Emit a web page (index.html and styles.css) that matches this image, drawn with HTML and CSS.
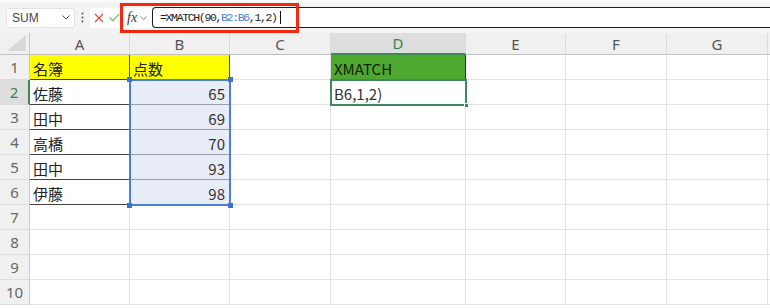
FILE: index.html
```html
<!DOCTYPE html>
<html lang="ja">
<head>
    <meta charset="UTF-8">
    <title>XMATCH</title>
    <link rel="stylesheet" href="styles.css">
</head>
<body>
<div class="toolbar">
    <div class="namebox">
        <span>SUM</span>
        <svg width="8" height="5" viewBox="0 0 8 5"><path d="M0.5 0.5 L4 4 L7.5 0.5" fill="none" stroke="#555" stroke-width="1"/></svg>
    </div>
    <div class="grip">
        <svg width="3" height="11" viewBox="0 0 3 11"><circle cx="1.5" cy="1.5" r="1" fill="#555"/><circle cx="1.5" cy="5.5" r="1" fill="#555"/><circle cx="1.5" cy="9.5" r="1" fill="#555"/></svg>
    </div>
    <div class="edit-btns">
        <svg width="10" height="10" viewBox="0 0 10 10"><path d="M1 1 L9 9 M9 1 L1 9" stroke="#e0483c" stroke-width="1.1"/></svg>
        <svg width="11" height="9" viewBox="0 0 11 9"><path d="M0.7 4.6 L3.8 7.7 L10.3 0.9" fill="none" stroke="#5bb66a" stroke-width="1.1"/></svg>
    </div>
    <div class="fx-btn">
        <span class="fx">fx</span>
        <svg width="7" height="4" viewBox="0 0 7 4"><path d="M0.5 0.5 L3.5 3.5 L6.5 0.5" fill="none" stroke="#888" stroke-width="1"/></svg>
    </div>
    <div class="formula">=XMATCH(90,<span class="ref-txt">B2:B6</span>,1,2)<span class="caret"></span></div>
    <div class="mark"></div>
</div>

<div class="sheet">
    <!-- column headers -->
    <div class="c corner"><svg width="19" height="16" viewBox="0 0 19 16"><path d="M19 0 L19 16 L0 16 Z" fill="#d9d9d9"/></svg></div>
    <div class="c hd">A</div>
    <div class="c hd">B</div>
    <div class="c hd">C</div>
    <div class="c hd sel">D</div>
    <div class="c hd">E</div>
    <div class="c hd">F</div>
    <div class="c hd">G</div>
    <div class="c hd"></div>

    <!-- row 1 -->
    <div class="c rh">1</div>
    <div class="c yel box">名簿</div>
    <div class="c yel box">点数</div>
    <div class="c"></div>
    <div class="c green box">XMATCH</div>
    <div class="c"></div><div class="c"></div><div class="c"></div><div class="c"></div>

    <!-- row 2 -->
    <div class="c rh sel">2</div>
    <div class="c box">佐藤</div>
    <div class="c box num ref">65</div>
    <div class="c"></div>
    <div class="c edit">B6,1,2)</div>
    <div class="c"></div><div class="c"></div><div class="c"></div><div class="c"></div>

    <!-- row 3 -->
    <div class="c rh">3</div>
    <div class="c box">田中</div>
    <div class="c box num ref">69</div>
    <div class="c"></div><div class="c"></div>
    <div class="c"></div><div class="c"></div><div class="c"></div><div class="c"></div>

    <!-- row 4 -->
    <div class="c rh">4</div>
    <div class="c box">高橋</div>
    <div class="c box num ref">70</div>
    <div class="c"></div><div class="c"></div>
    <div class="c"></div><div class="c"></div><div class="c"></div><div class="c"></div>

    <!-- row 5 -->
    <div class="c rh">5</div>
    <div class="c box">田中</div>
    <div class="c box num ref">93</div>
    <div class="c"></div><div class="c"></div>
    <div class="c"></div><div class="c"></div><div class="c"></div><div class="c"></div>

    <!-- row 6 -->
    <div class="c rh">6</div>
    <div class="c box">伊藤</div>
    <div class="c box num ref">98</div>
    <div class="c"></div><div class="c"></div>
    <div class="c"></div><div class="c"></div><div class="c"></div><div class="c"></div>

    <!-- rows 7 - 10 -->
    <div class="c rh">7</div>
    <div class="c"></div><div class="c"></div><div class="c"></div><div class="c"></div>
    <div class="c"></div><div class="c"></div><div class="c"></div><div class="c"></div>

    <div class="c rh">8</div>
    <div class="c"></div><div class="c"></div><div class="c"></div><div class="c"></div>
    <div class="c"></div><div class="c"></div><div class="c"></div><div class="c"></div>

    <div class="c rh">9</div>
    <div class="c"></div><div class="c"></div><div class="c"></div><div class="c"></div>
    <div class="c"></div><div class="c"></div><div class="c"></div><div class="c"></div>

    <div class="c rh">10</div>
    <div class="c"></div><div class="c"></div><div class="c"></div><div class="c"></div>
    <div class="c"></div><div class="c"></div><div class="c"></div><div class="c"></div>

    <!-- selections drawn over the grid -->
    <div class="range-sel">
        <span class="knob tl"></span><span class="knob tr"></span>
        <span class="knob bl"></span><span class="knob br"></span>
    </div>
    <div class="active-cell"><span class="fill-handle"></span></div>
</div>
</body>
</html>
```

FILE: styles.css
```css
* {
    margin: 0;
    padding: 0;
    box-sizing: border-box;
}

body {
    font-family: "Noto Sans CJK JP", sans-serif;
    background-color: #f0f0f0;
    width: 770px;
    height: 308px;
    overflow: hidden;
}

/* Formula bar */
.toolbar {
    position: relative;
    height: 33px;
    display: flex;
    align-items: center;
    padding-left: 6px;
    background-color: #f3f3f3;
    border-top: 2px solid #fbfbfb;
}

.namebox {
    width: 69px;
    height: 20px;
    display: flex;
    align-items: center;
    justify-content: space-between;
    padding: 0 4px 0 5px;
    background-color: #fff;
    border: 1px solid #e3e3e3;
    border-radius: 3px;
    font-family: "Liberation Sans", sans-serif;
    font-size: 12px;
    color: #444;
}

.grip {
    width: 15px;
    display: flex;
    justify-content: center;
}

.edit-btns {
    width: 30px;
    height: 20px;
    display: flex;
    align-items: center;
    gap: 5px;
    padding-left: 4px;
    background-color: #fff;
    border-radius: 3px 0 0 3px;
}

.fx-btn {
    width: 32px;
    height: 20px;
    display: flex;
    align-items: center;
    gap: 3px;
    padding-left: 7px;
    background-color: #fff;
}

.fx {
    font-family: "Liberation Serif", serif;
    font-style: italic;
    font-size: 14px;
    color: #333;
    line-height: 1;
}

.formula {
    flex: 1;
    height: 21px;
    display: flex;
    align-items: center;
    padding-left: 7px;
    background-color: #fff;
    border: 1.5px solid #1e1e1e;
    border-right: none;
    border-radius: 4px 0 0 4px;
    font-family: "Liberation Mono", monospace;
    font-size: 11.5px;
    letter-spacing: -1.35px;
    color: #222;
}

.formula .ref-txt {
    color: #3c7fd9;
}

.formula .caret {
    width: 1px;
    height: 13px;
    margin-left: 3px;
    background-color: #111;
}

.mark {
    position: absolute;
    left: 120px;
    top: 1px;
    width: 179px;
    height: 30px;
    border: 3px solid #f3290f;
}

/* Sheet */
.sheet {
    position: relative;
    display: grid;
    grid-template-columns: 30px 100px 100px 101px 135px 100px 101px 101px 2px;
    grid-template-rows: 22px repeat(10, 25px) 3px;
    background-color: #fff;
}

.c {
    display: flex;
    align-items: center;
    padding: 2px 3px 0;
    border-right: 1px solid #e2e2e2;
    border-bottom: 1px solid #e2e2e2;
    font-size: 15px;
    color: #222;
    white-space: nowrap;
    overflow: hidden;
}

.corner {
    background-color: #f0f0f0;
    border-right-color: #c8c8c8;
    border-bottom-color: #c0c0c0;
    align-items: flex-end;
    justify-content: flex-end;
    padding: 0 3px 3px 0;
}

.hd {
    justify-content: center;
    background-color: #f0f0f0;
    border-right-color: #dadada;
    border-bottom-color: #c0c0c0;
    font-family: "Noto Sans", sans-serif;
    font-size: 15px;
    color: #555;
    padding-top: 0;
}

.hd.sel {
    background-color: #dedede;
    color: #3a8054;
    border-bottom: 2px solid #3a8a52;
}

.rh {
    justify-content: center;
    background-color: #f0f0f0;
    border-right-color: #c8c8c8;
    border-bottom-color: #dcdcdc;
    font-family: "Noto Sans", sans-serif;
    font-size: 15px;
    color: #666;
    padding: 0;
}

.rh.sel {
    background-color: #dedede;
    color: #3a8054;
    border-right: 2px solid #3a8a52;
}

.box {
    border-right-color: #444;
    border-bottom-color: #444;
}

.yel {
    background-color: #ffff00;
}

.green {
    background-color: #4ea72e;
    border-right-color: #1f3a14;
    border-bottom-color: #1f3a14;
    color: #14200e;
}

.edit {
    color: #333;
}

.num {
    justify-content: flex-end;
    padding-right: 4px;
    color: #333;
}

.ref {
    background-color: #e8ecf6;
    border-bottom-color: #9aa0aa;
}

.range-sel {
    position: absolute;
    left: 129px;
    top: 46px;
    width: 102px;
    height: 127px;
    border: 2px solid #4a80d8;
}

.knob {
    position: absolute;
    width: 5px;
    height: 5px;
    background-color: #3a70d0;
}

.knob.tl { left: -4px; top: -4px; }
.knob.tr { right: -4px; top: -4px; }
.knob.bl { left: -4px; bottom: -4px; }
.knob.br { right: -4px; bottom: -4px; }

.active-cell {
    position: absolute;
    left: 330px;
    top: 46px;
    width: 137px;
    height: 27px;
    border: 2px solid #3f8a5c;
}

.fill-handle {
    position: absolute;
    right: -4px;
    bottom: -4px;
    width: 5px;
    height: 5px;
    background-color: #3f8a5c;
    border: 1px solid #fff;
}
```
